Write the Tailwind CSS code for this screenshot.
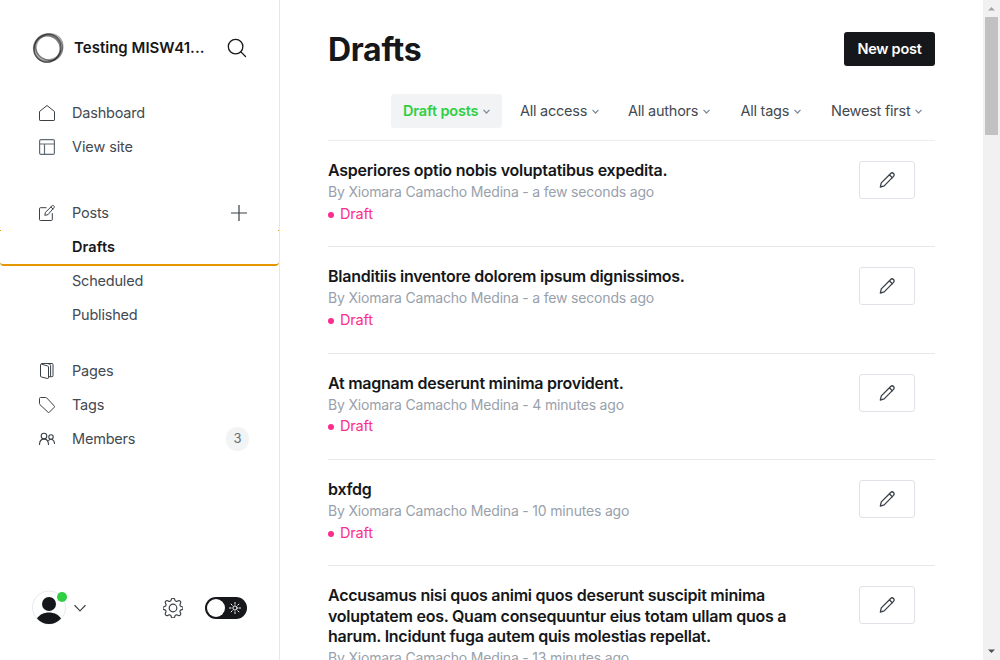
<!DOCTYPE html>
<html lang="en">
<head>
<meta charset="utf-8">
<title>Drafts</title>
<script src="https://cdn.jsdelivr.net/npm/@tailwindcss/browser@4"></script>
</head>
<body class="flex h-[660px] w-[1000px] overflow-hidden bg-white font-['Inter',sans-serif] text-[#434a52]">

<nav class="flex w-[280px] shrink-0 flex-col border-r border-[#e5e7eb] text-[14.5px] tracking-[-0.2px]">
  <header class="mt-6 flex h-12 items-center pl-8 pr-8">
    <svg class="size-8 shrink-0" viewBox="0 0 32 32" fill="none" stroke="#222">
      <ellipse cx="15.2" cy="16.600" rx="13.300" ry="13.200" stroke-width="2" stroke="#333" stroke-opacity=".65"/>
      <ellipse cx="17.200" cy="15.2" rx="13.800" ry="12.600" stroke-width="1.700" stroke-opacity=".4" transform="rotate(-38 17 15)"/>
      <ellipse cx="16.800" cy="14.700" rx="14.200" ry="12.600" stroke-width="1.400" stroke-opacity=".45" transform="rotate(35 16 15)"/>
      <ellipse cx="15.2" cy="16.5" rx="14.3" ry="13.2" stroke-width="1" stroke-opacity=".6" transform="rotate(-60 15 16)"/>
    </svg>
    <span class="ml-[10px] whitespace-nowrap text-[15px] font-semibold tracking-[0.02px] text-[#15171a]">Testing MISW41...</span>
    <svg class="ml-auto size-5" viewBox="0 0 20 20" fill="none" stroke="#15171a" stroke-width="1.3" stroke-linecap="round"><circle cx="8.6" cy="8.6" r="7.3"/><path d="M13.9 13.9l4.600 4.600"/></svg>
  </header>

  <ul class="mt-6">
    <li class="flex h-[34px] items-center pl-[39px]">
      <svg class="size-4" viewBox="0 0 16 16" fill="none" stroke="#394047" stroke-linejoin="round"><path d="M.5 6.5 8 .5l7.500 6v8.400a.6.6 0 0 1-.6.6H1.100a.6.6 0 0 1-.6-.6z"/></svg>
      <span class="ml-[17px]">Dashboard</span>
    </li>
    <li class="flex h-[34px] items-center pl-[39px]">
      <svg class="size-4" viewBox="0 0 16 16" fill="none" stroke="#626a73" stroke-width="1.200"><rect x=".6" y=".6" width="14.800" height="14.800" rx="1.500"/><path d="M.5 5h15M5.500 5v10.500"/></svg>
      <span class="ml-[17px] tracking-[-0.1px]">View site</span>
    </li>
  </ul>

  <ul class="mt-8">
    <li class="flex h-[34px] items-center pl-[39px] pr-8">
      <svg class="size-4" viewBox="0 0 16 16" fill="none" stroke="#394047" stroke-linecap="round" stroke-linejoin="round"><path d="M13.300 8.500v6a1 1 0 0 1-1 1H1.500a1 1 0 0 1-1-1V3.700a1 1 0 0 1 1-1H7M8.700 9.700l-2.900.6.6-2.900L13 .9c.5-.5 1.300-.5 1.900 0 .6.600.6 1.400 0 1.900zM11.900 2l2.100 2"/></svg>
      <span class="ml-[17px]">Posts</span>
      <svg class="ml-auto size-4" viewBox="0 0 16 16" stroke="#394047" stroke-width="1.200"><path d="M0 8h16M8 0v16"/></svg>
    </li>
    <li class="relative flex h-[34px] items-center pl-[72px] font-semibold tracking-[0.1px] text-[#15171a]">
      Drafts
      <span class="absolute left-0 right-0 bottom-[-2px] h-[5px] rounded-b-[4px] border-b-2 border-[#e59700]"></span>
      <span class="absolute left-0 top-0 h-px w-px bg-[#e59700]"></span>
      <span class="absolute right-0 top-0 h-px w-px bg-[#e59700]"></span>
    </li>
    <li class="flex h-[34px] items-center pl-[72px]">Scheduled</li>
    <li class="flex h-[34px] items-center pl-[72px]">Published</li>
  </ul>

  <ul class="mt-[22px]">
    <li class="flex h-[34px] items-center pl-[39px]">
      <svg class="size-4" viewBox="0 0 16 16" fill="none" stroke="#394047" stroke-linejoin="round"><path d="M1.500 1.500v11.700c0 .4.200.6.600.700l6.400 1.600c.6.100 1-.2 1-.7V4c0-.5-.3-.8-.8-1L2.300 1.100c-.5-.1-.8.100-.8.400zM2 1c.2-.3.500-.5.900-.5h10.100a1 1 0 0 1 1 1v11.200a1 1 0 0 1-1 1h-3.500M8.500.5l2.300.8c.5.200.8.500.8 1v11.200"/></svg>
      <span class="ml-[17px]">Pages</span>
    </li>
    <li class="flex h-[34px] items-center pl-[39px]">
      <svg class="size-4" viewBox="0 0 16 16" fill="none" stroke="#394047" stroke-linejoin="round"><path d="M.5 1.500a1 1 0 0 1 1-1h5.200c.4 0 .7.200 1 .4l7.500 8c.4.4.4 1 0 1.400l-4.800 4.900c-.4.400-1 .4-1.400 0L1 7.700c-.3-.3-.5-.6-.5-1z"/></svg>
      <span class="ml-[17px]">Tags</span>
    </li>
    <li class="flex h-[34px] items-center pl-[39px] pr-[30px]">
      <svg class="size-4" viewBox="0 0 16 16" fill="none" stroke="#394047" stroke-width="1.100" stroke-linecap="round"><circle cx="5" cy="5" r="2.800"/><circle cx="12" cy="6" r="2.200"/><path d="M.5 13.500C.6 10 2.500 8.100 5 8.100s4.400 1.900 4.500 5.400M9.700 9.300c2.700-2.300 5.700-.5 5.800 3.200"/></svg>
      <span class="ml-[17px]">Members</span>
      <span class="ml-auto flex h-6 w-[23px] items-center justify-center rounded-full bg-[#f1f3f4] text-[13px] text-[#626d79]">3</span>
    </li>
  </ul>

  <footer class="mb-[34px] mt-auto flex h-9 items-center pl-8 pr-8">
    <svg class="size-9" viewBox="0 0 36 36"><circle cx="17" cy="17.500" r="16.500" fill="#fff" stroke="#e5e9ed"/><circle cx="17" cy="14" r="7" fill="#15171a"/><path d="M5 28.500C7.500 24.500 12 22.500 17 22.500s9.500 2 12 6c-3 3.500-7 5.500-12 5.500s-9-2-12-5.500z" fill="#15171a"/><circle cx="30" cy="7" r="5" fill="#30cf43"/></svg>
    <svg class="ml-[6px] h-2 w-3" viewBox="0 0 12 8" fill="none" stroke="#394047" stroke-width="1.100" stroke-linecap="round" stroke-linejoin="round"><path d="M.8 1.500 6 6.900l5.200-5.400"/></svg>
    <svg class="ml-auto size-5" viewBox="0.800 0.800 20.400 20.400" fill="none" stroke="#394047" stroke-width="1.200" stroke-linejoin="round"><circle cx="11" cy="11" r="3.900"/><path d="M9.300 2.200a1.800 1.800 0 0 1 3.400 0l.3.900a1.800 1.800 0 0 0 2.500 1l.8-.4a1.800 1.800 0 0 1 2.400 2.400l-.4.8a1.800 1.800 0 0 0 1 2.500l.9.300a1.500 1.500 0 0 1 0 2.900l-.9.300a1.800 1.800 0 0 0-1 2.500l.4.800a1.800 1.800 0 0 1-2.400 2.400l-.8-.4a1.800 1.800 0 0 0-2.500 1l-.3.900a1.800 1.800 0 0 1-3.400 0l-.3-.9a1.800 1.800 0 0 0-2.500-1l-.8.4a1.800 1.800 0 0 1-2.400-2.400l.4-.8a1.800 1.800 0 0 0-1-2.500l-.9-.3a1.500 1.500 0 0 1 0-2.900l.9-.3a1.800 1.800 0 0 0 1-2.500l-.4-.8a1.800 1.800 0 0 1 2.400-2.400l.8.400a1.800 1.800 0 0 0 2.500-1z"/></svg>
    <span class="ml-[22px] flex h-[22px] w-[42px] items-center rounded-full bg-[#15171a] pl-[2px]">
      <span class="size-[18px] rounded-full bg-white"></span>
      <svg class="ml-1 size-3" viewBox="0 0 12 12" fill="none" stroke="#fff" stroke-width="1" stroke-linecap="round"><circle cx="6" cy="6" r="2.100"/><path d="M6 .5v1.600M6 9.900v1.600M.5 6h1.600M9.900 6h1.600M2.100 2.100l1.100 1.100M8.800 8.800l1.100 1.100M2.100 9.900l1.100-1.100M8.800 3.200l1.100-1.100"/></svg>
    </span>
  </footer>
</nav>

<main class="flex-1 overflow-hidden px-12">
  <header class="mt-8 flex h-[34px] items-center justify-between">
    <h1 class="pt-[2px] text-[32px] font-bold leading-none tracking-[-0.3px] text-[#15171a]">Drafts</h1>
    <button class="h-[34px] w-[91px] whitespace-nowrap rounded-[3px] bg-[#15171a] text-[14.5px] font-semibold tracking-[-0.25px] text-white">New post</button>
  </header>
  <div id="filters" class="mt-7 flex h-[47px] items-start justify-end border-b border-[#ebeef0] text-[14.5px] tracking-[-0.25px]"></div>
  <ol id="posts"></ol>
</main>

<aside class="flex w-[17px] shrink-0 flex-col items-center bg-[#f1f1f1]">
  <svg class="h-[17px] w-[17px]" viewBox="0 0 17 17"><path d="M5 10.500h7L8.500 7z" fill="#a3a3a3"/></svg>
  <div class="h-[118px] w-[13px] bg-[#c1c1c1]"></div>
  <svg class="mt-auto h-[17px] w-[17px]" viewBox="0 0 17 17"><path d="M5 6.500h7L8.500 10z" fill="#505050"/></svg>
</aside>

<script>
const filters = [['Draft posts',111],['All access',108],['All authors',112.5],['All tags',90.5],['Newest first',116]];
document.getElementById('filters').innerHTML = filters.map(([label,w],i) => `
  <div class="flex h-[34px] items-center whitespace-nowrap rounded-[3px] ${i ? '' : 'mr-[6px] bg-[#f1f3f4] font-semibold tracking-[-0.15px] text-[#30cf43]'}" style="width:${w}px;padding-left:12px">
    <span>${label}</span>
    <svg class="ml-[5px] h-[5px] w-[7px]" viewBox="0 0 7 5" fill="none" stroke="#7c8b9a" stroke-width="1.200"><path d="M.5.800 3.500 4 6.500.800"/></svg>
  </div>`).join('');
const posts = [
  ['Asperiores optio nobis voluptatibus expedita.','a few seconds ago'],
  ['Blanditiis inventore dolorem ipsum dignissimos.','a few seconds ago'],
  ['At magnam deserunt minima provident.','4 minutes ago'],
  ['bxfdg','10 minutes ago'],
  ['Accusamus nisi quos animi quos deserunt suscipit minima<br>voluptatem eos. Quam consequuntur eius totam ullam quos a<br>harum. Incidunt fuga autem quis molestias repellat.','13 minutes ago']];
document.getElementById('posts').innerHTML = posts.map(([title,time]) => `
  <li class="flex min-h-[106.3px] justify-between border-b border-[#e6e9eb] pr-5 pt-[19px]">
    <div class="whitespace-nowrap">
      <h3 class="text-[16px] font-semibold leading-[20.4px] tracking-[-0.245px] text-[#15171a]">${title}</h3>
      <p class="mt-[0.7px] text-[14px] leading-[22px] tracking-[-0.185px] text-[#98a1ab]">By Xiomara Camacho Medina - ${time}</p>
      <p class="-mt-[0.3px] flex items-center text-[14.5px] leading-[22px] tracking-[-0.15px] text-[#fb2d8d]"><span class="mr-[6px] mt-[2px] size-[6px] rounded-full bg-[#fb2d8d]"></span>Draft</p>
    </div>
    <button class="mt-px flex h-[38px] w-14 items-center justify-center rounded-[3px] border border-[#dfe3e7]">
      <svg class="size-4" viewBox="0 0 16 16" fill="none" stroke="#394047" stroke-width="1.300" stroke-linecap="round" stroke-linejoin="round"><path d="M1.300 15.100l1-4.200L11.700 1.500c.8-.8 2-.8 2.800 0s.8 2.100 0 2.900L5.200 13.900zM10.400 2.800l3 3.100"/></svg>
    </button>
  </li>`).join('');
</script>
</body>
</html>
